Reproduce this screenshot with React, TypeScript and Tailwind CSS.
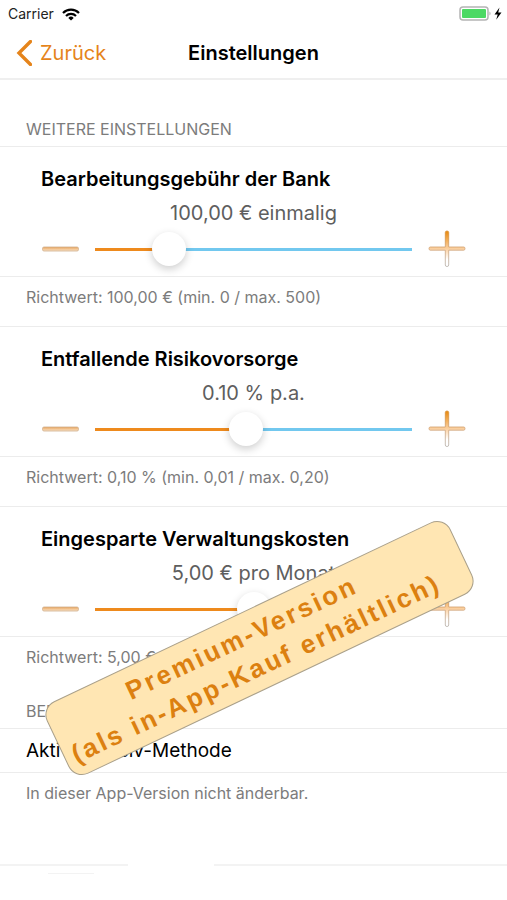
import * as React from "react"

interface Setting {
  id: string
  title: string
  min: number
  max: number
  step: number
  initial: number
  format: (value: number) => string
  hint: string
}

const euro = (value: number) => value.toFixed(2).replace(".", ",") + " €"

const settings: Setting[] = [
  {
    id: "gebuehr",
    title: "Bearbeitungsgebühr der Bank",
    min: 0,
    max: 500,
    step: 10,
    initial: 100,
    format: (value) => `${euro(value)} einmalig`,
    hint: "Richtwert: 100,00 € (min. 0 / max. 500)",
  },
  {
    id: "risiko",
    title: "Entfallende Risikovorsorge",
    min: 0.01,
    max: 0.2,
    step: 0.01,
    initial: 0.1,
    format: (value) => `${value.toFixed(2)} % p.a.`,
    hint: "Richtwert: 0,10 % (min. 0,01 / max. 0,20)",
  },
  {
    id: "verwaltung",
    title: "Eingesparte Verwaltungskosten",
    min: 0,
    max: 10,
    step: 0.5,
    initial: 5,
    format: (value) => `${euro(value)} pro Monat`,
    hint: "Richtwert: 5,00 € (min. 0 / max. 10)",
  },
]

function WifiIcon() {
  return (
    <svg viewBox="0 0 18 13" className="h-[13px] w-[18px]" fill="none" stroke="#000" strokeWidth="2.2">
      <path d="M1 5 A11.3 11.3 0 0 1 17 5" />
      <path d="M4 8 A7.1 7.1 0 0 1 14 8" />
      <path d="M9 12.6 L6.3 9.9 A3.9 3.9 0 0 1 11.7 9.9 Z" fill="#000" stroke="none" />
    </svg>
  )
}

function BatteryIcon() {
  return (
    <svg viewBox="0 0 44 16" className="h-4 w-11">
      <rect x="1" y="1" width="28" height="13" rx="3" fill="#fff" stroke="#b4b4b4" strokeWidth="1.5" />
      <rect x="3" y="3" width="24" height="9" rx="1" fill="#4cd964" />
      <path d="M30.5 5.5 A2.5 2.5 0 0 1 30.5 9.5 Z" fill="#a8a8a8" />
      <path d="M40.5 1.5 L35.5 8.5 H38.7 L37.2 13.8 L42.5 6.6 H39.2 Z" fill="#000" />
    </svg>
  )
}

function MinusIcon() {
  return (
    <svg viewBox="0 0 38 38" className="size-[38px]">
      <defs>
        <linearGradient id="minus-fill" x1="0" y1="0" x2="0" y2="1">
          <stop offset="0" stopColor="#e9a45c" />
          <stop offset="1" stopColor="#fbe3c6" />
        </linearGradient>
      </defs>
      <rect x="1.5" y="17" width="36" height="4" rx="1.5" fill="url(#minus-fill)" stroke="#cfae8d" strokeWidth="0.8" />
    </svg>
  )
}

function PlusIcon() {
  return (
    <svg viewBox="0 0 38 38" className="size-[38px]">
      <defs>
        <linearGradient id="plus-fill" x1="0" y1="0" x2="0" y2="1">
          <stop offset="0" stopColor="#e8890c" />
          <stop offset="0.5" stopColor="#fbd0a0" />
          <stop offset="0.8" stopColor="#fff" />
        </linearGradient>
        <linearGradient id="plus-line" x1="0" y1="0" x2="0" y2="1">
          <stop offset="0" stopColor="#d98a2b" />
          <stop offset="0.5" stopColor="#d0a276" />
          <stop offset="1" stopColor="#b5afa9" />
        </linearGradient>
      </defs>
      <path
        d="M17.3 2.5 Q17.3 1 19 1 Q20.7 1 20.7 2.5 V17 H35.8 Q37 17 37 18.6 Q37 20.2 35.8 20.2 H20.7 V35 Q20.7 36.5 19 36.5 Q17.3 36.5 17.3 35 V20.2 H2.2 Q1 20.2 1 18.6 Q1 17 2.2 17 H17.3 Z"
        fill="url(#plus-fill)"
        stroke="url(#plus-line)"
        strokeWidth="0.8"
      />
    </svg>
  )
}

function SettingSlider({ setting }: { setting: Setting }) {
  const [value, setValue] = React.useState(setting.initial)
  const { min, max, step } = setting
  const percent = ((value - min) / (max - min)) * 100

  function change(next: number) {
    setValue(Math.min(max, Math.max(min, next)))
  }

  return (
    <section>
      <div className="border-y border-[#ececec] px-[41px] pt-4 pb-[9px]">
        <label htmlFor={setting.id} className="block text-xl leading-8 font-semibold text-black">
          {setting.title}
        </label>
        <output htmlFor={setting.id} className="block text-center text-xl leading-9 text-[#5e5e5e]">
          {setting.format(value)}
        </output>
        <div className="flex h-9 items-center gap-4">
          <button type="button" aria-label="Verringern" onClick={() => change(value - step)}>
            <MinusIcon />
          </button>
          <input
            id={setting.id}
            type="range"
            min={min}
            max={max}
            step={step}
            value={value}
            onChange={(e) => change(Number(e.target.value))}
            className="h-9 min-w-0 flex-1 appearance-none bg-[length:100%_3px] bg-center bg-no-repeat outline-none [&::-webkit-slider-thumb]:size-[34px] [&::-webkit-slider-thumb]:appearance-none [&::-webkit-slider-thumb]:rounded-full [&::-webkit-slider-thumb]:bg-white [&::-webkit-slider-thumb]:shadow-[0_3px_8px_rgba(0,0,0,0.2)]"
            style={{
              backgroundImage: `linear-gradient(to right, #ee8a1d ${percent}%, #72c8ef ${percent}%)`,
            }}
          />
          <button type="button" aria-label="Erhöhen" onClick={() => change(value + step)}>
            <PlusIcon />
          </button>
        </div>
      </div>
      <p className="h-[49px] px-[26px] pt-2 text-base leading-6 text-[#7c7c7c]">{setting.hint}</p>
    </section>
  )
}

export default function App() {
  return (
    <div className="min-h-screen overflow-hidden bg-white font-['Inter','Liberation_Sans',sans-serif]">
      <header className="border-b-2 border-[#efefef]">
        <div className="flex h-7 items-center justify-between pr-1 pl-2 text-sm text-[#222]">
          <div className="flex items-center gap-2">
            <span>Carrier</span>
            <WifiIcon />
          </div>
          <BatteryIcon />
        </div>
        <div className="grid h-[50px] grid-cols-3 items-center px-4 text-xl">
          <a href="#" className="flex items-center gap-2 text-[#e5841b]">
            <svg viewBox="0 0 16 26" className="h-[26px] w-4" fill="none" stroke="currentColor" strokeWidth="3.4">
              <path d="M14.5 1.5 L3 13 L14.5 24.5" strokeLinecap="round" />
            </svg>
            Zurück
          </a>
          <h1 className="text-center font-semibold text-black">Einstellungen</h1>
        </div>
      </header>

      <main className="relative">
        <h2 className="px-[26px] pt-[37px] pb-[5px] text-base leading-6 text-[#7c7c7c]">WEITERE EINSTELLUNGEN</h2>
        {settings.map((setting) => (
          <SettingSlider key={setting.id} setting={setting} />
        ))}

        <h2 className="px-[26px] pt-[13px] pb-[5px] text-base leading-6 text-[#7c7c7c]">BERECHNUNG</h2>
        <p className="border-y border-[#ececec] px-[26px] text-[19px] leading-[43px] text-black">Aktiv-/Passiv-Methode</p>
        <p className="h-[91px] px-[26px] pt-2 text-base leading-6 text-[#7c7c7c]">
          In dieser App-Version nicht änderbar.
        </p>

        <div className="flex gap-[86px]">
          <div className="w-32 border-t-2 border-[#f3f3f3]" />
          <div className="flex-1 border-t-2 border-[#f3f3f3]" />
        </div>
        <div className="mt-[7px] ml-12 w-[46px] border-t border-[#f3f3f3]" />

        <div className="absolute top-[528px] left-9 flex h-20 w-[447px] -rotate-[25.4deg] flex-col justify-center rounded-[15px] border border-[#aaa08a] bg-[#ffe6b3] pr-6 text-center font-['Liberation_Sans',Arial,sans-serif] text-[26px] leading-[34px] font-bold tracking-widest text-[#dc8010]">
          <p>Premium-Version</p>
          <p>(als in-App-Kauf erhältlich)</p>
        </div>
      </main>
    </div>
  )
}
